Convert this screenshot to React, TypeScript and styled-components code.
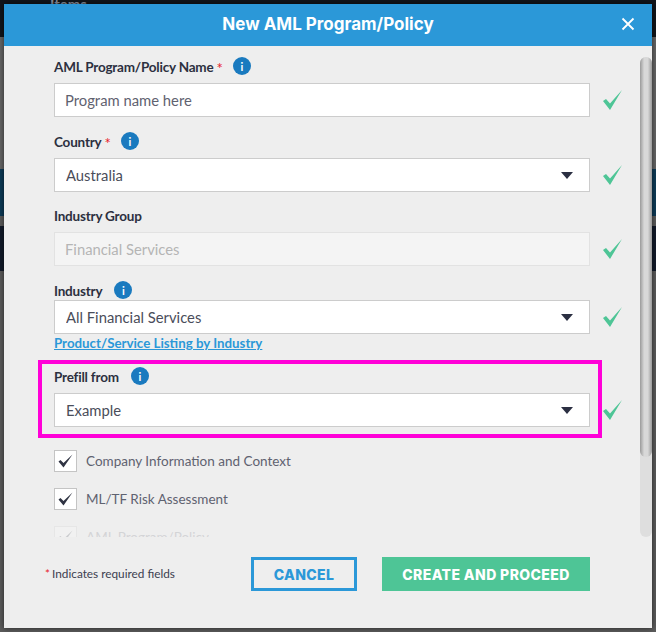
import React from 'react'
import styled, { createGlobalStyle } from 'styled-components';

const Global = createGlobalStyle`
html, body {
  margin: 0;
  height: 632px;
  overflow: hidden;
  background: #5c5c5c;
}
* {
  box-sizing: border-box;
}
`;

const Backdrop = styled.div`
height: 632px;
display: flex;
flex-direction: column;
`;

const Band = styled.div<{ $color: string; $height: number }>`
height: ${(p) => p.$height}px;
background: ${(p) => p.$color};
flex: none;
`;

const BackdropTitle = styled.div`
padding-left: 50px;
font: 700 15px/8px "Lato", sans-serif;
color: #8d93a0;
`;

const Modal = styled.div`
position: absolute;
top: 4px;
left: 4px;
width: 648px;
height: 624px;
background: #eeeeee;
box-shadow: 0 0 6px rgba(0, 0, 0, 0.6);
font-family: "Lato", sans-serif;
`;

const Header = styled.header`
height: 42px;
padding-bottom: 2px;
background: #2b98d8;
display: grid;
grid-template-columns: 1fr auto 1fr;
align-items: center;
`;

const Title = styled.h2`
grid-column: 2;
margin: 0;
font: 700 17px "Inter", sans-serif;
color: #fff;
`;

const CloseButton = styled.button`
justify-self: end;
display: flex;
margin: 0 17px 0 0;
padding: 0;
border: none;
background: none;
`;

const Body = styled.div`
position: relative;
height: 491px;
overflow: hidden;
padding: 11px 0 0 50px;
`;

const Field = styled.div<{ $after?: number }>`
margin-bottom: ${(p) => p.$after ?? 15}px;
`;

const LabelRow = styled.div<{ $tight?: boolean }>`
height: 18px;
margin-bottom: ${(p) => (p.$tight ? 1 : 8)}px;
display: flex;
align-items: center;
`;

const Label = styled.label`
padding-top: 2px;
font-size: 13.5px;
font-weight: 700;
letter-spacing: -0.2px;
color: #2c3040;
`;

const Required = styled.span`
margin: 0 -2px 0 3px;
padding-top: 3px;
color: #e8202a;
font-size: 15px;
`;

const Info = styled.span`
width: 18px;
height: 18px;
margin-left: 12px;
border-radius: 50%;
background: #1a7abf;
color: #fff;
font-size: 11px;
font-weight: 700;
display: flex;
align-items: center;
justify-content: center;
`;

const ControlRow = styled.div`
display: flex;
align-items: center;
gap: 13px;
`;

const TextInput = styled.input`
width: 536px;
height: 34px;
padding: 0 10px;
border: 1px solid #cccccc;
background: #fff;
font: 14.8px "Lato", sans-serif;
color: #555;
outline: none;

&::placeholder {
  color: #5f6270;
  opacity: 1;
}

&:disabled {
  background: #f4f4f4;
  border-color: #e2e2e2;
  color: #b5b5b5;
}
`;

const SelectWrap = styled.div`
position: relative;
width: 536px;
height: 34px;
`;

const Select = styled.select`
width: 100%;
height: 100%;
padding: 0 11px;
border: 1px solid #cccccc;
border-radius: 0;
background: #fff;
font: 14.8px "Lato", sans-serif;
color: #4a4d5a;
appearance: none;
outline: none;
`;

const Caret = styled.span`
position: absolute;
top: 14px;
right: 17px;
border-left: 6.5px solid transparent;
border-right: 6.5px solid transparent;
border-top: 7px solid #2b2f42;
`;

const ListingLink = styled.a`
display: block;
height: 18px;
font-size: 13.3px;
line-height: 18px;
font-weight: 700;
color: #2b98d8;
text-decoration: underline;
`;

const CheckRow = styled.div<{ $faded?: boolean }>`
display: flex;
align-items: center;
gap: 9px;
height: 22px;
margin-bottom: 16px;
opacity: ${(p) => (p.$faded ? 0.18 : 1)};
`;

const CheckBox = styled.span`
width: 23px;
height: 22px;
border: 1px solid #c4c4c4;
background: #fff;
display: flex;
align-items: center;
justify-content: center;
`;

const CheckLabel = styled.span`
font-size: 13.5px;
color: #5f6270;
`;

const Highlight = styled.div`
position: absolute;
top: 314px;
left: 34px;
width: 564px;
height: 78px;
border: 4px solid #ff00d8;
pointer-events: none;
`;

const ScrollTrack = styled.div`
position: absolute;
top: 11px;
right: 0;
width: 12px;
height: 480px;
border-radius: 6px;
background: #dedede;
`;

const ScrollThumb = styled.div`
height: 400px;
border-radius: 6px;
background: linear-gradient(to right, #9a9a9a, #d8d8d8 35%, #d8d8d8 65%, #9a9a9a);
`;

const Footer = styled.footer`
display: flex;
align-items: center;
padding: 20px 62px 0 41px;
`;

const Note = styled.span`
flex: 1;
padding-bottom: 2px;
font-size: 11.8px;
color: #3c4050;
`;

const NoteStar = styled.span`
margin-right: 2px;
color: #e8202a;
`;

const Button = styled.button<{ $primary?: boolean }>`
height: 34px;
width: ${(p) => (p.$primary ? 208 : 106)}px;
margin-left: ${(p) => (p.$primary ? 25 : 0)}px;
border: 3px solid ${(p) => (p.$primary ? '#4ec596' : '#2b98d8')};
background: ${(p) => (p.$primary ? '#4ec596' : 'transparent')};
color: ${(p) => (p.$primary ? '#fff' : '#2b98d8')};
font: 800 14px "Inter", sans-serif;
letter-spacing: 0.4px;
`;

const GreenCheck: React.FC = () => (
  <svg width="19" height="20" viewBox="0 0 19 20">
    <path d="M0 11 L3 9 L7 13.5 L19 0 L7 20 Z" fill="#4ec596" />
  </svg>
);

const Tick: React.FC = () => (
  <svg width="15" height="14" viewBox="0 0 15 14">
    <path d="M0.5 7.5 L2.5 6 L5.5 9 L14.5 0.5 L5.5 13.5 Z" fill="#2f3342" />
  </svg>
);

const Dropdown: React.FC<{ value: string }> = ({ value }) => (
  <SelectWrap>
    <Select defaultValue={value}>
      <option>{value}</option>
    </Select>
    <Caret />
  </SelectWrap>
);

const App: React.FC = () => {
  return (
    <>
      <Global />
      <Backdrop>
        <Band $color="#11151b" $height={37}>
          <BackdropTitle>Items</BackdropTitle>
        </Band>
        <Band $color="#666666" $height={132} />
        <Band $color="#0d3b57" $height={47} />
        <Band $color="#5c5c5c" $height={10} />
        <Band $color="#121a2a" $height={45} />
      </Backdrop>
      <Modal>
        <Header>
          <Title>New AML Program/Policy</Title>
          <CloseButton aria-label="Close">
            <svg width="14" height="14" viewBox="0 0 14 14">
              <path d="M1.5 1.5 L12.5 12.5 M12.5 1.5 L1.5 12.5" stroke="#fff" strokeWidth="1.8" />
            </svg>
          </CloseButton>
        </Header>
        <Body>
          <Field>
            <LabelRow>
              <Label>AML Program/Policy Name</Label>
              <Required>*</Required>
              <Info>i</Info>
            </LabelRow>
            <ControlRow>
              <TextInput placeholder="Program name here" />
              <GreenCheck />
            </ControlRow>
          </Field>
          <Field $after={14}>
            <LabelRow>
              <Label>Country</Label>
              <Required>*</Required>
              <Info>i</Info>
            </LabelRow>
            <ControlRow>
              <Dropdown value="Australia" />
              <GreenCheck />
            </ControlRow>
          </Field>
          <Field>
            <LabelRow>
              <Label>Industry Group</Label>
            </LabelRow>
            <ControlRow>
              <TextInput disabled value="Financial Services" />
              <GreenCheck />
            </ControlRow>
          </Field>
          <Field $after={15}>
            <LabelRow $tight>
              <Label>Industry</Label>
              <Info>i</Info>
            </LabelRow>
            <ControlRow>
              <Dropdown value="All Financial Services" />
              <GreenCheck />
            </ControlRow>
            <ListingLink>Product/Service Listing by Industry</ListingLink>
          </Field>
          <Field $after={23}>
            <LabelRow>
              <Label>Prefill from</Label>
              <Info>i</Info>
            </LabelRow>
            <ControlRow>
              <Dropdown value="Example" />
              <GreenCheck />
            </ControlRow>
          </Field>
          <CheckRow>
            <CheckBox><Tick /></CheckBox>
            <CheckLabel>Company Information and Context</CheckLabel>
          </CheckRow>
          <CheckRow>
            <CheckBox><Tick /></CheckBox>
            <CheckLabel>ML/TF Risk Assessment</CheckLabel>
          </CheckRow>
          <CheckRow $faded>
            <CheckBox><Tick /></CheckBox>
            <CheckLabel>AML Program/Policy</CheckLabel>
          </CheckRow>
          <Highlight />
          <ScrollTrack>
            <ScrollThumb />
          </ScrollTrack>
        </Body>
        <Footer>
          <Note><NoteStar>*</NoteStar>Indicates required fields</Note>
          <Button>CANCEL</Button>
          <Button $primary>CREATE AND PROCEED</Button>
        </Footer>
      </Modal>
    </>
  )
}

export default App;
